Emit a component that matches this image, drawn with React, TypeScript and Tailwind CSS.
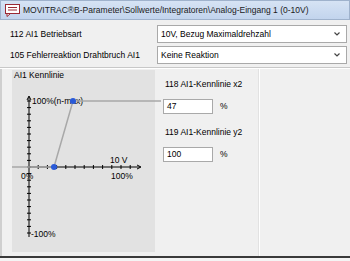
import React from "react";

const font = { fontFamily: '"Liberation Sans", Arial, sans-serif' };

function Chevron() {
  return (
    <svg width="8" height="6" viewBox="0 0 8 6" className="shrink-0">
      <path d="M1.5 1.5 L4 4 L6.5 1.5" fill="none" stroke="#444" strokeWidth="1.2" />
    </svg>
  );
}

function Select({ value }: { value: string }) {
  return (
    <div className="flex h-[18px] w-[190px] items-center justify-between border border-[#a9a9a9] bg-white pl-[3px] pr-[5px]">
      <span>{value}</span>
      <Chevron />
    </div>
  );
}

function ParamRow({ label, value }: { label: string; value: string }) {
  return (
    <div className="flex items-center">
      <span className="w-[157px] pl-[10px]">{label}</span>
      <Select value={value} />
    </div>
  );
}

function TitleIcon() {
  return (
    <svg width="15" height="13" viewBox="0 0 15 13" className="shrink-0">
      <rect x="0.5" y="0.5" width="14" height="9" fill="#fff" stroke="#9b2a35" />
      <path d="M2 10 L2 12.5 L5 10" fill="#fff" stroke="#9b2a35" />
      <path d="M3 3.5 H12 M3 6 H12" stroke="#9b2a35" strokeWidth="1" />
    </svg>
  );
}

function Chart() {
  const ticksY = Array.from({ length: 21 }, (_, i) => 101 + i * 6.6);
  const ticksX = Array.from({ length: 11 }, (_, i) => 29 + (i + 1) * 9.2);
  return (
    <svg width="143" height="170" viewBox="12 82 143 170" className="block overflow-visible">
      {/* axes */}
      <line x1="29" y1="97" x2="29" y2="237" stroke="#000" strokeWidth="1" />
      <path d="M27 100 L29 96 L31 100" fill="none" stroke="#000" strokeWidth="1" />
      <line x1="29" y1="167" x2="140" y2="167" stroke="#000" strokeWidth="1" />
      <path d="M137 165 L141 167 L137 169" fill="none" stroke="#000" strokeWidth="1" />
      {ticksY.map((y) => (
        <line key={y} x1="27" y1={y} x2="31" y2={y} stroke="#000" strokeWidth="1" />
      ))}
      {ticksX.map((x) => (
        <line key={x} x1={x} y1="165" x2={x} y2="169" stroke="#000" strokeWidth="1" />
      ))}
      {/* labels */}
      <g fontSize="8.5" fill="#000" style={font}>
        <text x="32" y="104">100%(n-max)</text>
        <text x="110" y="163">10 V</text>
        <text x="21" y="179">0%</text>
        <text x="111" y="179">100%</text>
        <text x="31" y="237">-100%</text>
      </g>
      {/* curve */}
      <polyline
        points="12,167 54,167 73,101 161,101"
        fill="none"
        stroke="#a8a8a8"
        strokeWidth="1.5"
      />
      <circle cx="54" cy="167" r="3" fill="#2a5ad8" />
      <circle cx="73" cy="101" r="3" fill="#2a5ad8" />
    </svg>
  );
}

function NumField({ label, value }: { label: string; value: string }) {
  return (
    <div className="flex flex-col">
      <span className="pl-[2px] leading-[11px]">{label}</span>
      <div className="mt-[9px] flex items-center">
        <div className="flex h-[15px] w-[50px] items-center border border-[#a9a9a9] bg-white pl-[3px]">
          {value}
        </div>
        <span className="ml-[7px]">%</span>
      </div>
    </div>
  );
}

export default function App() {
  return (
    <div
      className="flex h-[261px] w-[350px] flex-col overflow-hidden bg-[#f0f0f0] text-[8.5px] text-black"
      style={font}
    >
      <div className="flex h-[20px] shrink-0 items-center gap-[3px] border border-[#9fb2cc] bg-gradient-to-b from-[#d6e3f4] to-[#c2d4ed] pl-[4px] text-[#1a1a1a]">
        <TitleIcon />
        <span>MOVITRAC®B-Parameter\Sollwerte/Integratoren\Analog-Eingang 1 (0-10V)</span>
      </div>

      <div className="flex flex-col gap-[3px] pt-[5px]">
        <ParamRow label="112 AI1 Betriebsart" value="10V, Bezug Maximaldrehzahl" />
        <ParamRow label="105 Fehlerreaktion Drahtbruch AI1" value="Keine Reaktion" />
      </div>

      <div className="mt-[3px] h-[2px] shrink-0 border-t border-[#c8c8c8] bg-white" />

      <div className="flex min-h-0 flex-1">
        <div className="flex border-l-2 border-[#cfcfcf] pl-[10px] pt-[1px]">
          <div className="flex h-[182px] w-[143px] flex-col bg-[#e2e2e2]">
            <div className="h-[12px] pl-[2px] leading-[11px]">AI1 Kennlinie</div>
            <Chart />
          </div>
          <div className="flex w-[103px] flex-col gap-[13px] pl-[8px] pt-[9px]">
            <NumField label="118 AI1-Kennlinie x2" value="47" />
            <NumField label="119 AI1-Kennlinie y2" value="100" />
          </div>
        </div>
        <div className="w-[2px] border-l border-[#e2e2e2] bg-white" />
        <div className="flex-1" />
      </div>

      <div className="h-[2px] shrink-0 bg-[#3a3a3a]" />
      <div className="h-[3px] shrink-0 bg-[#f4f4f4]" />
    </div>
  );
}
